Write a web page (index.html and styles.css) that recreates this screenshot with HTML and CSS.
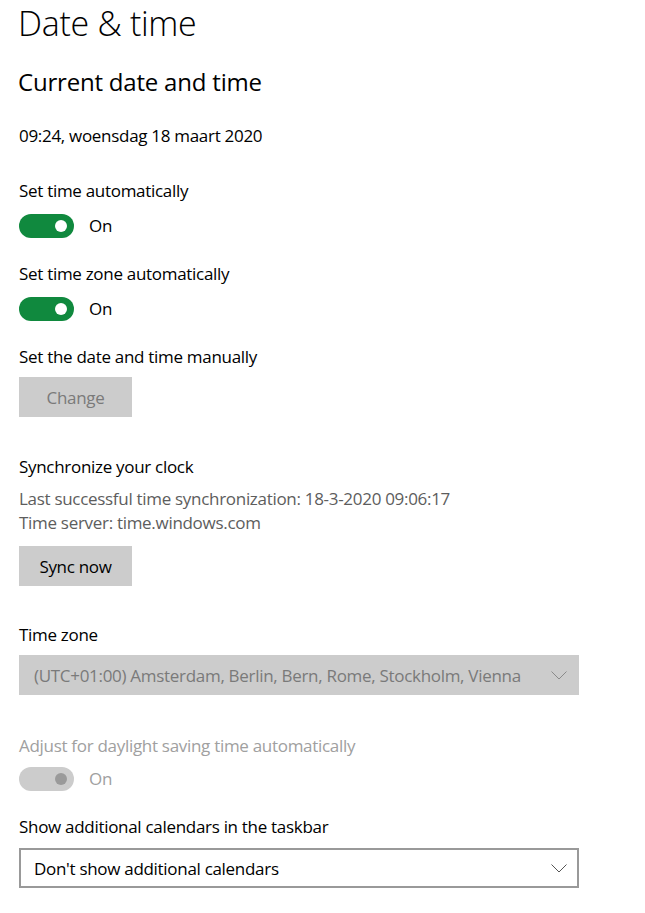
FILE: index.html
```html
<!DOCTYPE html>
<html lang="en">
<head>
<meta charset="utf-8">
<title>Date &amp; time</title>
<link rel="stylesheet" href="styles.css">
</head>
<body>
<main class="page">
  <h1 class="title">Date &amp; time</h1>
  <h2 class="subtitle">Current date and time</h2>
  <p class="now">09:24, woensdag 18 maart 2020</p>

  <div class="label first">Set time automatically</div>
  <div class="toggle-row">
    <span class="toggle on"><span class="knob"></span></span>
    <span class="state">On</span>
  </div>

  <div class="label">Set time zone automatically</div>
  <div class="toggle-row">
    <span class="toggle on"><span class="knob"></span></span>
    <span class="state">On</span>
  </div>

  <div class="label">Set the date and time manually</div>
  <button class="btn btn-disabled">Change</button>

  <div class="label sync-head">Synchronize your clock</div>
  <div class="info info-first">Last successful time synchronization: 18-3-2020 09:06:17</div>
  <div class="info">Time server: time.windows.com</div>
  <button class="btn btn-sync">Sync now</button>

  <div class="label tz-head">Time zone</div>
  <div class="select select-disabled">
    <span class="select-text">(UTC+01:00) Amsterdam, Berlin, Bern, Rome, Stockholm, Vienna</span>
    <svg class="chevron" width="16" height="9" viewBox="0 0 16 9"><polyline points="0.5,0.5 8,8 15.5,0.5" fill="none" stroke="#8a8a8a" stroke-width="1"/></svg>
  </div>

  <div class="label label-disabled dst-head">Adjust for daylight saving time automatically</div>
  <div class="toggle-row dst-row">
    <span class="toggle off-disabled"><span class="knob"></span></span>
    <span class="state state-disabled">On</span>
  </div>

  <div class="label cal-head">Show additional calendars in the taskbar</div>
  <div class="select select-enabled">
    <span class="select-text">Don't show additional calendars</span>
    <svg class="chevron" width="16" height="9" viewBox="0 0 16 9"><polyline points="0.5,0.5 8,8 15.5,0.5" fill="none" stroke="#555" stroke-width="1"/></svg>
  </div>
</main>
</body>
</html>
```

FILE: styles.css
```css
html, body {
  margin: 0;
  padding: 0;
  background: #ffffff;
}

body {
  font-family: "Open Sans", "Noto Sans", "Liberation Sans", sans-serif;
  color: #000;
}

.page {
  padding: 0 0 0 19px;
  display: flex;
  flex-direction: column;
  align-items: flex-start;
}

.title {
  margin: 0 0 0 -1px;
  font-size: 34px;
  font-weight: 300;
  line-height: 46px;
  letter-spacing: -0.3px;
}

.subtitle {
  margin: 20px 0 0 -1px;
  font-size: 24px;
  font-weight: 400;
  line-height: 32px;
  letter-spacing: -0.2px;
}

.now {
  margin: 26px 0 0 0;
  font-size: 17px;
  line-height: 24px;
  letter-spacing: -0.3px;
}

.label {
  margin-top: 24px;
  font-size: 17px;
  line-height: 24px;
  letter-spacing: -0.3px;
}

.label.first { margin-top: 31px; }
.label.sync-head { margin-top: 38px; }
.label.tz-head { margin-top: 37px; }
.label.dst-head { margin-top: 39px; }
.label.cal-head { margin-top: 24px; }

.label-disabled { color: #a0a0a0; }

.toggle-row {
  margin-top: 11px;
  display: flex;
  align-items: center;
  gap: 15px;
  height: 24px;
}

.dst-row { margin-top: 9px; }

.toggle {
  box-sizing: border-box;
  width: 55px;
  height: 24px;
  border-radius: 12px;
  display: flex;
  align-items: center;
  justify-content: flex-end;
  padding-right: 7px;
}

.toggle.on { background: #10893e; }
.toggle.on .knob { background: #ffffff; }

.toggle.off-disabled { background: #cccccc; }
.toggle.off-disabled .knob { background: #9a9a9a; }

.knob {
  width: 12px;
  height: 12px;
  border-radius: 50%;
}

.state {
  font-size: 17px;
  line-height: 24px;
  letter-spacing: -0.3px;
}

.state-disabled { color: #a0a0a0; }

.btn {
  margin-top: 8px;
  width: 113px;
  height: 40px;
  border: none;
  padding: 0;
  font-family: inherit;
  font-size: 17px;
  letter-spacing: -0.3px;
  background: #cccccc;
  color: #000;
}

.btn-disabled { color: #7a7a7a; }
.btn-sync { margin-top: 11px; }

.info {
  font-size: 17px;
  line-height: 24px;
  letter-spacing: -0.3px;
  color: #5d5d5d;
}

.info-first { margin-top: 8px; }

.select {
  box-sizing: border-box;
  margin-top: 8px;
  width: 560px;
  height: 40px;
  display: flex;
  align-items: center;
  justify-content: space-between;
  padding: 0 12px 0 15px;
  font-size: 17px;
  letter-spacing: -0.3px;
}

.select-disabled {
  background: #cccccc;
  color: #7a7a7a;
}

.select-enabled {
  margin-top: 9px;
  height: 40px;
  border: 2px solid #999999;
  padding: 0 10px 0 13px;
  background: #fff;
  color: #000;
}

.chevron { display: block; }
```
